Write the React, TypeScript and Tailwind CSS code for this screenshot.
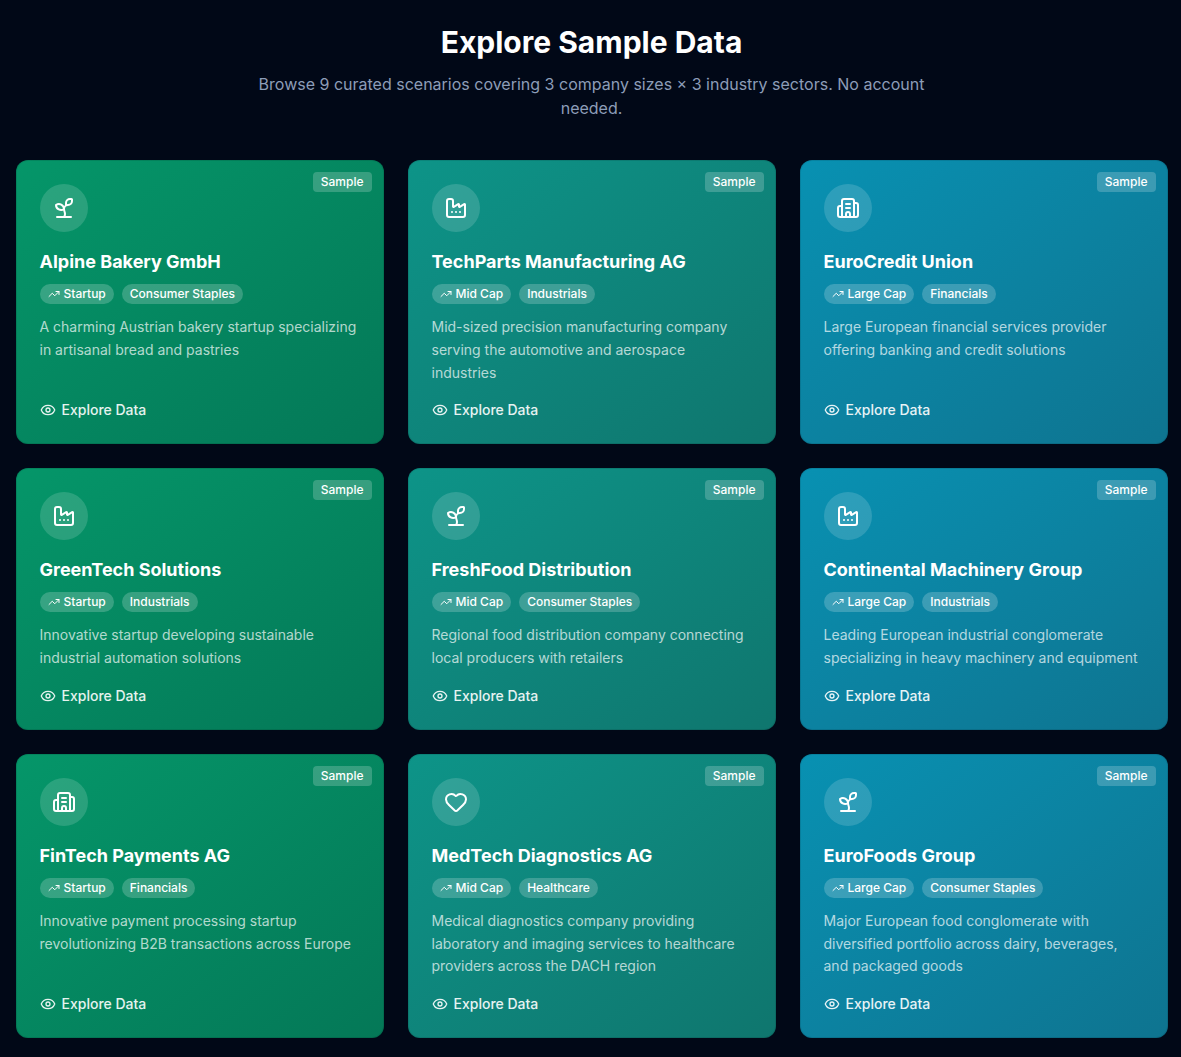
import {Building2, Eye, Factory, Heart, Sprout, TrendingUp} from "lucide-react";

const palettes = {
    green: "from-[#059669] to-[#047857]",
    teal: "from-[#0d9488] to-[#0f766e]",
    cyan: "from-[#0891b2] to-[#0e7490]",
};

const samples = [
    {name: "Alpine Bakery GmbH", size: "Startup", sector: "Consumer Staples", icon: Sprout, color: palettes.green, text: "A charming Austrian bakery startup specializing in artisanal bread and pastries"},
    {name: "TechParts Manufacturing AG", size: "Mid Cap", sector: "Industrials", icon: Factory, color: palettes.teal, text: "Mid-sized precision manufacturing company serving the automotive and aerospace industries"},
    {name: "EuroCredit Union", size: "Large Cap", sector: "Financials", icon: Building2, color: palettes.cyan, text: "Large European financial services provider offering banking and credit solutions"},
    {name: "GreenTech Solutions", size: "Startup", sector: "Industrials", icon: Factory, color: palettes.green, text: "Innovative startup developing sustainable industrial automation solutions"},
    {name: "FreshFood Distribution", size: "Mid Cap", sector: "Consumer Staples", icon: Sprout, color: palettes.teal, text: "Regional food distribution company connecting local producers with retailers"},
    {name: "Continental Machinery Group", size: "Large Cap", sector: "Industrials", icon: Factory, color: palettes.cyan, text: "Leading European industrial conglomerate specializing in heavy machinery and equipment"},
    {name: "FinTech Payments AG", size: "Startup", sector: "Financials", icon: Building2, color: palettes.green, text: "Innovative payment processing startup revolutionizing B2B transactions across Europe"},
    {name: "MedTech Diagnostics AG", size: "Mid Cap", sector: "Healthcare", icon: Heart, color: palettes.teal, text: "Medical diagnostics company providing laboratory and imaging services to healthcare providers across the DACH region"},
    {name: "EuroFoods Group", size: "Large Cap", sector: "Consumer Staples", icon: Sprout, color: palettes.cyan, text: "Major European food conglomerate with diversified portfolio across dairy, beverages, and packaged goods"},
];

const App = () => {
    return (
        <div className="min-h-[1057px] bg-[#010817] pl-[15.5px] pt-6 pb-[19px] font-['Inter',sans-serif]">
            <div className="w-[1152px]">
                <div className="mb-10 text-center">
                    <h1 className="text-3xl font-bold text-white">Explore Sample Data</h1>
                    <p className="mx-auto mt-3 max-w-2xl text-base text-[#8d9db8]">
                        Browse 9 curated scenarios covering 3 company sizes × 3 industry sectors. No account needed.
                    </p>
                </div>

                <div className="grid grid-cols-3 gap-6">
                    {samples.map((s) => {
                        const Icon = s.icon;
                        return (
                            <div key={s.name} className={`relative flex transform-gpu flex-col rounded-xl bg-gradient-to-br p-6 ring-1 ring-inset ring-black/10 ${s.color}`}>
                                <span className="absolute right-3 top-3 rounded bg-white/20 px-2 py-0.5 text-xs font-medium text-white">
                                    Sample
                                </span>
                                <div className="mb-4 flex h-12 w-12 items-center justify-center rounded-full bg-white/15">
                                    <Icon size={24} className="text-white" />
                                </div>
                                <h3 className="text-lg font-bold text-white">{s.name}</h3>
                                <div className="mt-2 flex gap-2">
                                    <span className="flex items-center gap-1 rounded-full bg-white/20 px-2 py-0.5 text-xs font-medium text-white">
                                        <TrendingUp size={12} />
                                        {s.size}
                                    </span>
                                    <span className="rounded-full bg-white/20 px-2 py-0.5 text-xs font-medium text-white">{s.sector}</span>
                                </div>
                                <p className="mt-3 flex-1 text-sm leading-relaxed text-white/70">{s.text}</p>
                                <div className="mt-4 flex items-center gap-1.5 text-sm font-medium text-white/90">
                                    <Eye size={16} />
                                    Explore Data
                                </div>
                            </div>
                        );
                    })}
                </div>
            </div>
        </div>
    );
};

export default App;
